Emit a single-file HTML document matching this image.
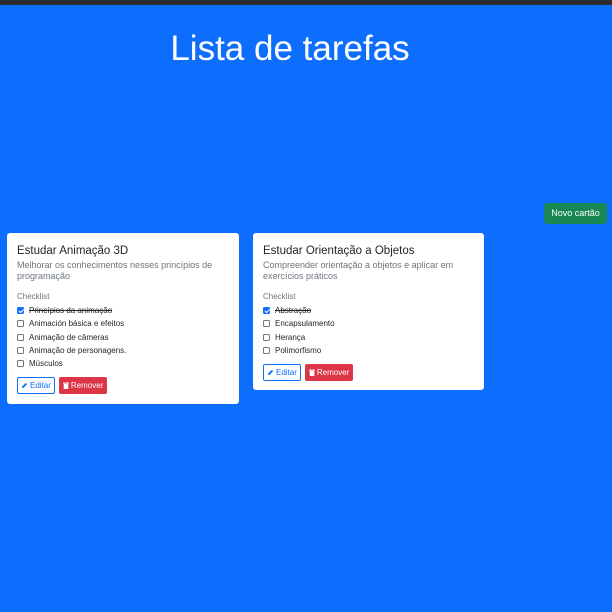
<!DOCTYPE html>
<html><head><style>
*{box-sizing:border-box;margin:0;padding:0}
body{width:612px;height:612px;background:#0d6efd;font-family:"Liberation Sans",sans-serif;position:relative;overflow:hidden}
.top{position:absolute;left:0;top:0;width:612px;height:5px;background:#2b2b2b}
h1{position:absolute;top:29px;left:0;width:580px;text-align:center;color:#fff;font-weight:400;font-size:35px}
.nb{position:absolute;left:544px;top:203px;width:63px;height:21px;background:#198754;color:#fff;font-size:9px;border-radius:3px;text-align:center;line-height:21px}
.card{position:absolute;top:233px;background:#fff;border-radius:3px;padding:10px 10px}
.t{font-size:11.5px;color:#212529;margin-top:2px}
.d{font-size:9px;color:#6c757d;line-height:11px;margin-top:3px}
.cl{font-size:8px;color:#6c757d;margin-top:10px;margin-bottom:3px}
.it{font-size:8px;color:#212529;height:13.3px;display:flex;align-items:center}
.cb{width:7px;height:7px;border:1px solid #777;border-radius:1.5px;margin-right:5px;flex:none}
.ck{background:#0d6efd;border-color:#0d6efd;position:relative}
.ck:after{content:"";position:absolute;left:1.5px;top:0;width:2px;height:3.5px;border:solid #fff;border-width:0 1px 1px 0;transform:rotate(45deg)}
.s{text-decoration:line-through}
.bt{display:flex;gap:4px;margin-top:7px}
.b{height:17px;font-size:8px;line-height:15px;padding:0 3px;border-radius:2px;border:1px solid;display:flex;align-items:center;gap:2px}
.e{color:#0d6efd;border-color:#0d6efd}
.r{background:#dc3545;border-color:#dc3545;color:#fff}
</style></head><body>
<div class="top"></div>
<h1>Lista de tarefas</h1>
<div class="nb">Novo cartão</div>
<div class="card" style="left:7px;width:232px;height:171px">
<div class="t">Estudar Animação 3D</div>
<div class="d">Melhorar os conhecimentos nesses princípios de programação</div>
<div class="cl">Checklist</div>
<div class="it"><span class="cb ck"></span><span class="s">Princípios da animação</span></div>
<div class="it"><span class="cb"></span>Animación básica e efeitos</div>
<div class="it"><span class="cb"></span>Animação de câmeras</div>
<div class="it"><span class="cb"></span>Animação de personagens.</div>
<div class="it"><span class="cb"></span>Músculos</div>
<div class="bt"><span class="b e"><svg width="7" height="7" viewBox="0 0 8 8"><path d="M1 7l.5-2L5.5 1l1.5 1.5-4 4z" fill="#0d6efd"/></svg>Editar</span><span class="b r"><svg width="6" height="7" viewBox="0 0 6 7"><rect x="0" y="0.5" width="6" height="1.2" fill="#fff"/><rect x="0.7" y="2" width="4.6" height="5" fill="#fff"/></svg>Remover</span></div>
</div>
<div class="card" style="left:253px;width:231px;height:157px">
<div class="t">Estudar Orientação a Objetos</div>
<div class="d">Compreender orientação a objetos e aplicar em exercícios práticos</div>
<div class="cl">Checklist</div>
<div class="it"><span class="cb ck"></span><span class="s">Abstração</span></div>
<div class="it"><span class="cb"></span>Encapsulamento</div>
<div class="it"><span class="cb"></span>Herança</div>
<div class="it"><span class="cb"></span>Polimorfismo</div>
<div class="bt"><span class="b e"><svg width="7" height="7" viewBox="0 0 8 8"><path d="M1 7l.5-2L5.5 1l1.5 1.5-4 4z" fill="#0d6efd"/></svg>Editar</span><span class="b r"><svg width="6" height="7" viewBox="0 0 6 7"><rect x="0" y="0.5" width="6" height="1.2" fill="#fff"/><rect x="0.7" y="2" width="4.6" height="5" fill="#fff"/></svg>Remover</span></div>
</div>
</body></html>
